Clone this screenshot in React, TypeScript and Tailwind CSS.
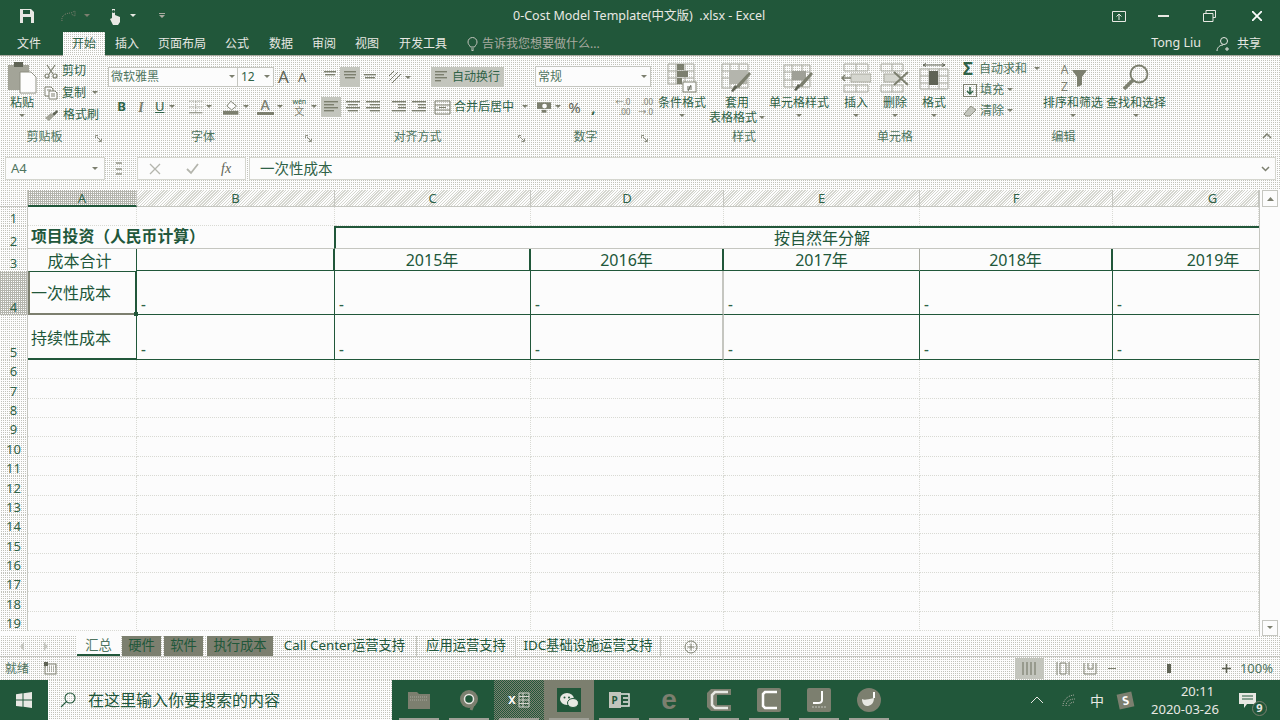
import type { ReactNode } from "react";

const DITHER = "bg-[repeating-conic-gradient(#c2c3bb_0_25%,#fdfdfd_0_100%)] bg-[length:2px_2px]";
const HATCH = "bg-[repeating-linear-gradient(135deg,#fdfdfd_0_1px,#d5d6cf_1px_2px)]";
const DARK = "bg-[repeating-conic-gradient(#fdfdfd_0_25%,#b4b5ad_0_100%)] bg-[length:2px_2px]";
const HOVER = "bg-[repeating-conic-gradient(#7c7f6f_0_25%,#21573a_0_50%,#7c7f6f_0_75%,#21573a_0_100%)] bg-[length:2px_2px]";

function Caret({ className = "" }: { className?: string }) {
  return (
    <svg width="6" height="4" viewBox="0 0 6 4" className={`shrink-0 text-[#7c7f6f] ${className}`}>
      <path d="M0 0h6L3 3z" fill="currentColor" />
    </svg>
  );
}

function Launcher() {
  return (
    <svg width="7" height="7" viewBox="0 0 7 7" className="shrink-0 text-[#8d8f82]">
      <path d="M0.5 3V0.5H3M2 2l4 4M6.5 3.5v3h-3" fill="none" stroke="currentColor" />
    </svg>
  );
}

function Group({ className, label, labelPad = "", launcher, children }: { className: string; label: string; labelPad?: string; launcher?: boolean; children: ReactNode }) {
  return (
    <div className={`flex flex-col shrink-0 ${className}`}>
      <div className="h-[73px]">{children}</div>
      <div className={`relative flex h-[16px] items-center justify-center text-[12px] text-[#4f7560] ${labelPad}`}>
        {label}
        {launcher && (
          <span className="absolute right-[5px] top-[6px]">
            <Launcher />
          </span>
        )}
      </div>
    </div>
  );
}

function BigBtn({ className, icon, lines, caret = true }: { className: string; icon: ReactNode; lines: ReactNode[]; caret?: boolean }) {
  return (
    <div className={`flex flex-col items-center pt-[6px] shrink-0 ${className}`}>
      <div className="flex h-[31px] items-center justify-center">{icon}</div>
      <div className="mt-[2px] text-center text-[12px] leading-[15px] text-[#2f6247] whitespace-nowrap">
        {lines.map((l, i) => (
          <div key={i} className="flex items-center justify-center gap-[2px]">
            {l}
          </div>
        ))}
      </div>
      {caret && <Caret className="mt-[4px]" />}
    </div>
  );
}

function Lines({ rows }: { rows: [number, number][] }) {
  return (
    <svg width="16" height="14" viewBox="0 0 16 14" className="text-[#7c7f6f]">
      {rows.map(([x, w], i) => (
        <rect key={i} x={x} y={1 + i * 3} width={w} height="1.4" fill="currentColor" />
      ))}
    </svg>
  );
}

const PasteIcon = (
  <svg width="30" height="34" viewBox="0 0 30 34">
    <rect x="1" y="4" width="21" height="25" fill="#a3a498" />
    <rect x="7" y="1" width="9" height="5" fill="#5f6355" />
    <path d="M13 11h11l5 5v16H13z" fill="#fdfdfd" stroke="#8d8f82" />
  </svg>
);

const CutIcon = (
  <svg width="14" height="15" viewBox="0 0 14 15" fill="none" stroke="#7c7f6f" strokeWidth="1.2">
    <path d="M3 1l6 9M11 1L5 10" />
    <circle cx="3" cy="12" r="2" />
    <circle cx="11" cy="12" r="2" />
  </svg>
);

const CopyIcon = (
  <svg width="14" height="14" viewBox="0 0 14 14" fill="#fdfdfd" stroke="#7c7f6f">
    <path d="M1 1h6l2 2v7H1z" />
    <path d="M5 5h6l2 2v6H5z" />
    <path d="M3 4h4M7 8h4M7 10h4" />
  </svg>
);

const BrushIcon = (
  <svg width="15" height="13" viewBox="0 0 15 13">
    <path d="M8 5l5-4 1 2-4 4z" fill="#5f6355" />
    <path d="M1 9l6-5 3 3-5 5z" fill="#a3a498" />
  </svg>
);

const CondIcon = (
  <svg width="30" height="30" viewBox="0 0 30 30" fill="none" stroke="#a9aaa0">
    <path d="M1 1h26v20H1zM1 8h26M1 15h26M9 1v20M18 1v20" />
    <rect x="10" y="1" width="7" height="6" fill="#7c7f6f" stroke="none" />
    <rect x="10" y="8" width="11" height="6" fill="#7c7f6f" stroke="none" />
    <rect x="10" y="15" width="5" height="6" fill="#7c7f6f" stroke="none" />
    <rect x="16" y="19" width="13" height="10" fill="#fdfdfd" stroke="#7c7f6f" />
    <path d="M20 24h5M20 26h5M24 22l-3 6" stroke="#5f6355" />
  </svg>
);

const TableIcon = (
  <svg width="32" height="32" viewBox="0 0 32 32" fill="none" stroke="#a9aaa0">
    <path d="M1 2h26v24H1zM1 9h26M1 16h26M9 2v24M18 2v24" />
    <rect x="8" y="8" width="18" height="14" fill="#b4b5ad" stroke="none" />
    <path d="M30 12L18 26l-3-2 13-14z" fill="#7c7f6f" stroke="none" />
    <path d="M17 25l-5 5-2-1 4-6z" fill="#5f6355" stroke="none" />
  </svg>
);

const CellStyleIcon = (
  <svg width="32" height="30" viewBox="0 0 32 30" fill="none" stroke="#a9aaa0">
    <path d="M1 2h26v22H1zM1 9h26M9 2v22M19 2v22M1 17h26" />
    <rect x="9" y="8" width="14" height="9" fill="#9fa097" stroke="none" />
    <path d="M30 11L19 24l-3-2 12-13z" fill="#7c7f6f" stroke="none" />
    <path d="M18 23l-5 5-2-1 4-6z" fill="#5f6355" stroke="none" />
  </svg>
);

const InsertIcon = (
  <svg width="30" height="30" viewBox="0 0 30 30" fill="none" stroke="#a9aaa0">
    <path d="M3 1h24v7H3zM3 22h24v7H3zM15 1v7M15 22v7" />
    <rect x="10" y="11" width="20" height="8" fill="#d5d6cf" stroke="#a9aaa0" />
    <path d="M1 15h9M4 12l-3 3 3 3" stroke="#7c7f6f" strokeWidth="1.5" />
  </svg>
);

const DeleteIcon = (
  <svg width="30" height="30" viewBox="0 0 30 30" fill="none" stroke="#a9aaa0">
    <path d="M1 1h22v7H1zM1 22h22v7H1zM12 1v7M12 22v7" />
    <rect x="4" y="11" width="16" height="8" fill="#d5d6cf" />
    <path d="M14 9l14 13M28 9L14 22" stroke="#7c7f6f" strokeWidth="2" />
  </svg>
);

const FormatIcon = (
  <svg width="30" height="30" viewBox="0 0 30 30" fill="none" stroke="#a9aaa0">
    <path d="M1 6h28v20H1zM1 13h28M1 20h28M10 6v20M20 6v20" />
    <rect x="10" y="8" width="9" height="14" fill="#5f6355" stroke="none" />
    <path d="M4 2h22M4 2l3-1.500M4 2l3 1.500M26 2l-3-1.500M26 2l-3 1.500" stroke="#5f6355" />
  </svg>
);

const SortIcon = (
  <div className="flex items-center">
    <div className="flex w-[13px] flex-col items-center text-[12px] leading-[17px] text-[#7c7f6f]">
      <span>A</span>
      <span>Z</span>
    </div>
    <svg width="17" height="18" viewBox="0 0 17 18">
      <path d="M1 1h15l-5 7v8l-5 2V8z" fill="#7c7f6f" />
    </svg>
  </div>
);

const FindIcon = (
  <svg width="28" height="28" viewBox="0 0 28 28" fill="none" stroke="#7c7f6f">
    <circle cx="17" cy="10" r="8.500" strokeWidth="1.800" />
    <path d="M11 16L2 25" strokeWidth="3.500" />
  </svg>
);

function Ribbon() {
  return (
    <div className={`flex h-[94px] ${DITHER}`}>
      <Group className="w-[107px]" label="剪贴板" labelPad="pr-[18px]" launcher>
        <div className="flex">
          <BigBtn className="w-[44px]" icon={PasteIcon} lines={["粘贴"]} />
          <div className="flex flex-col gap-[6px] pt-[7px] text-[12px] leading-[16px] text-[#2f6247]">
            <div className="flex items-center gap-[4px]">{CutIcon}<span>剪切</span></div>
            <div className="flex items-center gap-[4px]">{CopyIcon}<span>复制</span><Caret className="ml-[2px]" /></div>
            <div className="flex items-center gap-[4px]">{BrushIcon}<span>格式刷</span></div>
          </div>
        </div>
      </Group>

      <Group className="w-[210px]" label="字体" labelPad="pr-[18px]" launcher>
        <div className="flex h-[31px] items-end pl-[1px]">
          <div className="flex h-[20px] w-[130px] items-center justify-between border border-[#c5c6c0] bg-[#fcfcfc] px-[2px] text-[12px] text-[#4f7560]">
            微软雅黑<Caret />
          </div>
          <div className="flex h-[20px] w-[36px] items-center justify-between border border-l-0 border-[#c5c6c0] bg-[#fcfcfc] px-[3px] text-[12px] text-[#2f6247]">
            12<Caret />
          </div>
          <span className="ml-[4px] w-[20px] text-[17px] leading-[20px] text-[#5f6355]">A</span>
          <span className="w-[16px] text-[13px] leading-[20px] text-[#5f6355]">A</span>
        </div>
        <div className="mt-[10px] flex h-[20px] items-center text-[#2f6247]">
          <span className="ml-[5px] w-[20px] text-center text-[13px] font-bold">B</span>
          <span className="w-[20px] text-center font-['Liberation_Serif'] text-[14px] font-bold italic text-[#7c7f6f]">I</span>
          <span className="w-[19px] text-center text-[13px] underline">U</span>
          <Caret />
          <svg width="16" height="14" viewBox="0 0 16 14" fill="none" stroke="#a9aaa0" strokeDasharray="2 1" className="ml-[13px]">
            <path d="M1 1h14M1 7h14M8 1v12" />
            <path d="M1 13h14" stroke="#7c7f6f" strokeDasharray="none" />
          </svg>
          <Caret className="ml-[3px]" />
          <svg width="17" height="15" viewBox="0 0 17 15" className="ml-[11px]">
            <path d="M8 1l6 5-5 4-5-4z" fill="#fdfdfd" stroke="#7c7f6f" />
            <rect x="0" y="11" width="16" height="4" fill="#7c7f6f" />
          </svg>
          <Caret className="ml-[3px]" />
          <div className="ml-[8px] flex w-[17px] flex-col items-center">
            <span className="text-[14px] font-medium leading-[12px] text-[#7c7f6f]">A</span>
            <span className="mt-[1px] h-[3px] w-[17px] bg-[#7c7f6f]" />
          </div>
          <Caret className="ml-[3px]" />
          <div className="ml-[9px] flex w-[16px] flex-col items-center text-[#7c7f6f]">
            <span className="text-[7px] leading-[9px] text-[#2f6247]">wén</span>
            <span className="text-[10px] leading-[11px]">文</span>
          </div>
          <Caret className="ml-[4px]" />
        </div>
      </Group>

      <Group className="w-[213px]" label="对齐方式" labelPad="pr-[12px]" launcher>
        <div className="flex h-[31px] items-end">
          <div className="ml-[3px] flex h-[20px] w-[20px] items-center justify-center"><Lines rows={[[2, 12], [3, 10]]} /></div>
          <div className="flex h-[20px] w-[20px] items-center justify-center bg-[#c3c5bd]"><Lines rows={[[2, 12], [2, 12], [3, 10]]} /></div>
          <div className="flex h-[20px] w-[20px] items-center justify-center pt-[6px]"><Lines rows={[[2, 12], [3, 10]]} /></div>
          <svg width="16" height="14" viewBox="0 0 16 14" fill="none" stroke="#7c7f6f" className="ml-[7px] mb-[3px]">
            <path d="M2 11l9-9M5 13l9-9M2 6l5-5" />
          </svg>
          <Caret className="mb-[7px] ml-[2px]" />
          <div className="ml-[20px] flex h-[20px] w-[73px] items-center gap-[3px] bg-[#c3c5bd] pl-[3px] text-[12px] text-[#2f6247]">
            <Lines rows={[[1, 12], [1, 9], [1, 12], [1, 6]]} />
            <span className="-ml-[1px]">自动换行</span>
          </div>
        </div>
        <div className="mt-[10px] flex h-[20px] items-center">
          <div className="ml-[4px] flex h-[20px] w-[20px] items-center justify-center bg-[#c3c5bd]"><Lines rows={[[1, 14], [1, 10], [1, 14], [1, 10]]} /></div>
          <div className="ml-[2px] flex w-[20px] justify-center"><Lines rows={[[1, 14], [3, 10], [1, 14], [3, 10]]} /></div>
          <div className="flex w-[20px] justify-center"><Lines rows={[[1, 14], [5, 10], [1, 14], [5, 10]]} /></div>
          <div className="ml-[6px] flex w-[20px] justify-center"><Lines rows={[[1, 14], [7, 8], [7, 8], [1, 14]]} /></div>
          <div className="flex w-[20px] justify-center"><Lines rows={[[1, 14], [7, 8], [7, 8], [1, 14]]} /></div>
          <svg width="17" height="15" viewBox="0 0 17 15" fill="none" stroke="#7c7f6f" className="ml-[5px]">
            <path d="M1 1h15v13H1zM1 5h15M1 10h15M5 7.500h7" />
          </svg>
          <span className="ml-[3px] text-[12px] text-[#2f6247]">合并后居中</span>
          <Caret className="ml-[8px]" />
        </div>
      </Group>

      <Group className="w-[123px]" label="数字" labelPad="pr-[12px]" launcher>
        <div className="flex h-[31px] items-end pl-[5px]">
          <div className="flex h-[21px] w-[116px] items-center justify-between border border-[#c5c6c0] bg-[#fcfcfc] pl-[2px] pr-[3px] text-[12px] text-[#4f7560]">
            常规<Caret />
          </div>
        </div>
        <div className="mt-[10px] flex h-[20px] items-center text-[#7c7f6f]">
          <svg width="15" height="13" viewBox="0 0 15 13" className="ml-[7px]">
            <rect x="0" y="1" width="15" height="7" fill="#7c7f6f" />
            <circle cx="8" cy="5" r="2.500" fill="#fdfdfd" />
            <rect x="5" y="9" width="5" height="3" fill="#7c7f6f" />
          </svg>
          <Caret className="ml-[4px]" />
          <span className="ml-[7px] w-[16px] text-[15px] leading-[18px] text-[#5f6355]">%</span>
          <span className="ml-[8px] w-[10px] text-[15px] font-bold leading-[12px] text-[#2f6247]">,</span>
          <div className="ml-[7px] flex w-[24px] flex-col items-end text-[8px] leading-[10px] text-[#7c7f6f]"><span>←.0</span><span>.00</span></div>
          <div className="flex w-[24px] flex-col items-end text-[8px] leading-[10px] text-[#7c7f6f]"><span>.00</span><span>→.0</span></div>
        </div>
      </Group>

      <Group className="w-[182px]" label="样式">
        <div className="flex pl-[4px]">
          <BigBtn className="w-[50px]" icon={CondIcon} lines={["条件格式"]} />
          <BigBtn className="w-[60px]" icon={TableIcon} lines={["套用", <>表格格式<Caret /></>]} caret={false} />
          <BigBtn className="w-[64px]" icon={CellStyleIcon} lines={["单元格样式"]} />
        </div>
      </Group>

      <Group className="w-[120px]" label="单元格">
        <div className="flex pl-[2px]">
          <BigBtn className="w-[38px]" icon={InsertIcon} lines={["插入"]} />
          <BigBtn className="w-[40px]" icon={DeleteIcon} lines={["删除"]} />
          <BigBtn className="w-[38px]" icon={FormatIcon} lines={["格式"]} />
        </div>
      </Group>

      <Group className="relative flex-1" label="编辑" labelPad="pr-[108px]">
        <div className="flex">
          <div className="flex w-[86px] flex-col gap-[5px] pl-[8px] pt-[5px] text-[12px] leading-[16px] text-[#4f7560]">
            <div className="flex items-center gap-[3px]">
              <span className="w-[13px] text-[17px] font-bold leading-[16px] text-[#2f6247]">Σ</span>
              <span className="whitespace-nowrap">自动求和</span><Caret className="ml-[4px]" />
            </div>
            <div className="flex items-center gap-[3px]">
              <svg width="14" height="14" viewBox="0 0 14 14" fill="none" stroke="#7c7f6f">
                <rect x="0.500" y="1.500" width="13" height="12" />
                <path d="M7 4v7M4 8l3 3 3-3" stroke="#2f6247" strokeWidth="1.500" />
              </svg>
              <span>填充</span><Caret />
            </div>
            <div className="flex items-center gap-[3px]">
              <svg width="14" height="13" viewBox="0 0 14 13" fill="#c3c5bd" stroke="#8d8f82">
                <path d="M1 9l7-8 5 4-6 6H3z" />
              </svg>
              <span>清除</span><Caret />
            </div>
          </div>
          <BigBtn className="ml-[2px] w-[60px]" icon={SortIcon} lines={["排序和筛选"]} />
          <BigBtn className="ml-[3px] w-[60px]" icon={FindIcon} lines={["查找和选择"]} />
        </div>
        <svg width="10" height="6" viewBox="0 0 10 6" fill="none" stroke="#7c7f6f" strokeWidth="1.500" className="absolute right-[8px] bottom-[11px]">
          <path d="M1 5l4-4 4 4" />
        </svg>
      </Group>
    </div>
  );
}

function FormulaBar() {
  return (
    <div className={`flex h-[40px] items-start pt-[7px] ${DITHER}`}>
      <div className="ml-[5px] flex h-[23px] w-[100px] items-center justify-between border border-[#d5d6cf] bg-[#fcfcfc] pl-[5px] pr-[6px] text-[13px] text-[#4f7560]">
        A4<Caret />
      </div>
      <div className="ml-[11px] mt-[5px] flex h-[13px] w-[6px] flex-col justify-between">
        <span className="h-[2px] w-[6px] bg-[#a9aaa0]" />
        <span className="h-[2px] w-[6px] bg-[#a9aaa0]" />
        <span className="h-[2px] w-[6px] bg-[#a9aaa0]" />
      </div>
      <div className="ml-[15px] flex h-[23px] w-[109px] items-center border border-[#d5d6cf] bg-[#fcfcfc] text-[#b4b5ad]">
        <svg width="12" height="12" viewBox="0 0 12 12" stroke="currentColor" strokeWidth="1.300" className="ml-[11px]"><path d="M1 1l10 10M11 1L1 11" /></svg>
        <svg width="13" height="12" viewBox="0 0 13 12" fill="none" stroke="currentColor" strokeWidth="1.800" className="ml-[25px]"><path d="M1 6l4 4 7-9" /></svg>
        <span className="ml-[22px] font-['Liberation_Serif'] text-[14px] italic text-[#5f6355]">fx</span>
      </div>
      <div className="ml-[3px] mr-[4px] flex h-[23px] flex-1 items-center justify-between border border-[#d5d6cf] bg-[#fcfcfc] pl-[10px] pr-[5px] text-[14.500px] text-[#2f6247]">
        一次性成本
        <svg width="9" height="6" viewBox="0 0 9 6" fill="none" stroke="#7c7f6f" strokeWidth="1.500"><path d="M1 1l3.500 3.500L8 1" /></svg>
      </div>
    </div>
  );
}

const gridLine = "border-r border-b border-dotted border-[#d9dad4]";
const columns = ["A", "B", "C", "D", "E", "F", "G"];
const rowLabel = "flex items-end justify-center overflow-hidden text-[13px] leading-[15px] text-[#2f6247] border-r border-[#c5c6c0]";

function RowHead({ n, on }: { n: number; on?: boolean }) {
  return <div className={`${rowLabel} ${on ? DARK : DITHER}`}>{n}</div>;
}

function Dash({ className }: { className: string }) {
  return <div className={`flex items-end pl-[4px] text-[15px] font-medium leading-[19px] text-[#2f6247] ${className}`}>-</div>;
}

function Sheet() {
  return (
    <div className="flex h-[446px]">
      <div className="grid flex-1 grid-cols-[28px_109px_198px_196px_193px_196px_193px_146px] grid-rows-[17px_19px_23px_22px_44px_45px_repeat(14,19.360px)] overflow-hidden bg-[#fcfcfc]">
        <div className={`border-b border-r border-[#c5c6c0] ${DITHER}`} />
        {columns.map((c) => (
          <div
            key={c}
            className={`flex items-center justify-center border-r border-[#c5c6c0] text-[13px] leading-[14px] text-[#2f6247] ${
              c === "A" ? `border-b-2 border-b-[#21573a] ${DARK}` : `border-b ${HATCH} ${c === "G" ? "pl-[54px]" : ""}`
            }`}
          >
            {c}
          </div>
        ))}

        {/* row 1 */}
        <RowHead n={1} />
        {columns.map((c) => <div key={c} className={gridLine} />)}

        {/* row 2 */}
        <RowHead n={2} />
        <div className="col-span-2 flex items-center whitespace-nowrap border-b border-[#c5c6c0] pl-[3px] text-[15.800px] font-bold text-[#21573a]">
          项目投资（人民币计算）
        </div>
        <div className="col-span-5 -ml-[1px] flex items-center border-t-2 border-l-2 border-b border-t-[#21573a] border-l-[#21573a] border-b-[#c5c6c0] pl-[438px] text-[16px] text-[#21573a]">
          按自然年分解
        </div>

        {/* row 3 */}
        <RowHead n={3} />
        <div className="flex items-center justify-center border-r border-[#21573a] pr-[5px] pt-[2px] text-[16px] text-[#21573a]">成本合计</div>
        <div className="border-r-2 border-b border-[#21573a]" />
        {["2015年", "2016年", "2017年"].map((y, i) => (
          <div key={y} className={`flex items-center justify-center border-b border-b-[#21573a] text-[16px] text-[#21573a] ${i < 2 ? "border-r-2 border-r-[#21573a]" : "border-r border-r-[#a9aaa0]"}`}>{y}</div>
        ))}
        <div className="flex items-center justify-center border-b border-r-2 border-[#21573a] text-[16px] text-[#21573a]">2018年</div>
        <div className="flex items-center justify-center border-b border-[#21573a] pl-[54px] text-[16px] text-[#21573a]">2019年</div>

        {/* row 4 */}
        <RowHead n={4} on />
        <div className="relative flex items-center whitespace-nowrap border-2 border-t border-t-[#21573a] border-r-[#21573a] border-[#7c7f6f] pl-[1px] pt-[1px] text-[16px] text-[#21573a]">
          一次性成本
          <span className="absolute -bottom-[3px] -right-[3px] h-[4px] w-[4px] bg-[#21573a]" />
        </div>
        <Dash className="border-r border-b border-[#21573a]" />
        <Dash className="border-r border-b border-[#21573a]" />
        <Dash className="border-r-2 border-b border-r-[#c5c6c0] border-b-[#21573a]" />
        <Dash className="border-r border-b border-[#21573a]" />
        <Dash className="border-r border-b border-[#21573a]" />
        <Dash className="border-b border-[#21573a]" />

        {/* row 5 */}
        <RowHead n={5} />
        <div className="flex items-center whitespace-nowrap border-r border-b-2 border-[#21573a] pl-[3px] pt-[2px] text-[16px] text-[#21573a]">持续性成本</div>
        <Dash className="border-r border-b border-[#21573a]" />
        <Dash className="border-r border-b border-[#21573a]" />
        <Dash className="border-r-2 border-b border-r-[#c5c6c0] border-b-[#21573a]" />
        <Dash className="border-r border-b border-[#21573a]" />
        <Dash className="border-r border-b border-[#21573a]" />
        <Dash className="border-b border-[#21573a]" />

        {Array.from({ length: 14 }, (_, i) => i + 6).map((n) => (
          <div key={n} className="contents">
            <RowHead n={n} />
            {columns.map((c) => <div key={c} className={gridLine} />)}
          </div>
        ))}
      </div>

      <div className="flex w-[21px] flex-col border-l border-[#c5c6c0] bg-[#fcfcfc] px-[2px]">
        <div className="flex h-[17px] items-center justify-center border border-[#c5c6c0]"><svg width="7" height="4" viewBox="0 0 7 4"><path d="M0 4h7L3.500 0z" fill="#7c7f6f" /></svg></div>
        <div className="flex-1" />
        <div className="flex h-[16px] items-center justify-center border border-[#c5c6c0]"><Caret /></div>
      </div>
    </div>
  );
}

function SheetTabs() {
  return (
    <div className={`flex h-[21px] items-stretch border-b border-[#c5c6c0] text-[13.300px] leading-[18px] ${DITHER}`}>
      <div className="flex w-[77px] items-center pl-[20px] text-[#c5c6c0]">
        <svg width="30" height="9" viewBox="0 0 30 9" fill="currentColor"><path d="M4 0v9L0 4.500zM24 0v9l4-4.500z" /></svg>
      </div>
      <div className="flex w-[43px] justify-center border-b-2 border-[#21573a] bg-[#fcfcfc] text-[#4f7560]">汇总</div>
      <div className="ml-[2px] flex w-[39px] justify-center bg-[#7c7f6f] text-[#21573a]">硬件</div>
      <div className="ml-[3px] flex w-[39px] justify-center bg-[#7c7f6f] text-[#21573a]">软件</div>
      <div className="ml-[4px] flex w-[66px] justify-center bg-[#7c7f6f] text-[#21573a]">执行成本</div>
      <div className="flex w-[144px] justify-center border-r border-[#c5c6c0] text-[#21573a]">Call Center运营支持</div>
      <div className="flex w-[99px] justify-center border-r border-[#c5c6c0] text-[#21573a]">应用运营支持</div>
      <div className="flex w-[145px] justify-center border-r border-[#c5c6c0] text-[#21573a]">IDC基础设施运营支持</div>
      <svg width="14" height="14" viewBox="0 0 14 14" fill="none" stroke="#7c7f6f" className="ml-[23px] mt-[4px]">
        <circle cx="7" cy="7" r="6" /><path d="M7 3.500v7M3.500 7h7" />
      </svg>
    </div>
  );
}

function StatusBar() {
  return (
    <div className={`flex h-[23px] items-center text-[12px] text-[#4f7560] ${DITHER}`}>
      <span className="ml-[5px]">就绪</span>
      <svg width="13" height="13" viewBox="0 0 13 13" fill="none" stroke="#7c7f6f" className="ml-[15px]">
        <rect x="1" y="2" width="11" height="10" /><path d="M1 5h11M3 7h7M3 9h7" strokeDasharray="1 1" /><rect x="0" y="0" width="4" height="4" fill="#5f6355" stroke="none" />
      </svg>
      <div className="flex-1" />
      <div className="flex h-[21px] w-[29px] items-center justify-center bg-[#c3c5bd]">
        <svg width="16" height="13" viewBox="0 0 16 13" stroke="#7c7f6f" strokeWidth="1.200"><path d="M2 0v13M6 0v13M10 0v13M14 0v13" /></svg>
      </div>
      <svg width="14" height="13" viewBox="0 0 14 13" fill="none" stroke="#7c7f6f" className="ml-[12px]"><path d="M1 0v13M13 0v13M4 1h6v11H4z" /></svg>
      <svg width="14" height="13" viewBox="0 0 14 13" fill="none" stroke="#7c7f6f" className="ml-[13px]"><path d="M1 1v11h12V1M5 1v6h5V1" /></svg>
      <span className="ml-[11px] h-[1.500px] w-[8px] bg-[#7c7f6f]" />
      <span className="ml-[51px] h-[9px] w-[4px] bg-[#5f6355]" />
      <svg width="9" height="9" viewBox="0 0 9 9" stroke="#5f6355" strokeWidth="1.500" className="ml-[51px]"><path d="M4.500 0v9M0 4.500h9" /></svg>
      <span className="ml-[9px] mr-[7px] text-[13px]">100%</span>
    </div>
  );
}

const taskIcons: { key: string; wrap?: string; icon: ReactNode }[] = [
  {
    key: "folder",
    icon: (
      <svg width="22" height="18" viewBox="0 0 22 18">
        <path d="M0 1h9l2 2h11v15H0z" fill="#7c7f6f" />
        <path d="M2 6h18M2 9h18" stroke="#a9aaa0" strokeDasharray="1 1" />
      </svg>
    ),
  },
  {
    key: "chrome",
    icon: (
      <svg width="22" height="22" viewBox="0 0 22 22" fill="none">
        <circle cx="11" cy="10" r="9" fill="#7c7f6f" />
        <circle cx="11" cy="10" r="4.500" fill="#21573a" stroke="#e8e8e3" strokeWidth="1.500" />
        <path d="M16 14l-3 7" stroke="#7c7f6f" strokeWidth="3" />
      </svg>
    ),
  },
  {
    key: "excel",
    wrap: HOVER,
    icon: (
      <div className="flex items-center">
        <span className="text-[11px] font-bold text-[#fdfdfd]">X</span>
        <svg width="12" height="16" viewBox="0 0 12 16" fill="none" stroke="#d5d6cf" className="ml-[2px]">
          <path d="M1 1h10v14H1zM1 4.500h10M1 8h10M1 11.500h10M5 1v14" />
        </svg>
      </div>
    ),
  },
  {
    key: "wechat",
    wrap: "bg-[#7c7f6f]",
    icon: (
      <div className="flex h-[24px] w-[24px] items-center justify-center bg-[#21573a]">
        <svg width="20" height="17" viewBox="0 0 20 17">
          <ellipse cx="8" cy="7" rx="7" ry="6" fill="#e8e8e3" />
          <ellipse cx="14" cy="11" rx="5.500" ry="4.500" fill="#e8e8e3" stroke="#21573a" />
          <circle cx="5.500" cy="5.500" r="1" fill="#21573a" />
          <circle cx="10" cy="5.500" r="1" fill="#21573a" />
        </svg>
      </div>
    ),
  },
  {
    key: "ppt",
    icon: (
      <div className="flex items-center">
        <span className="flex h-[16px] w-[12px] items-center justify-center bg-[#c3c5bd] text-[10px] font-bold text-[#21573a]">P</span>
        <svg width="9" height="14" viewBox="0 0 9 14" fill="none" stroke="#e8e8e3" strokeWidth="1.500"><path d="M0 1h8v12H0M2 5h5M2 9h5" /></svg>
      </div>
    ),
  },
  {
    key: "edge",
    icon: <span className="font-['Liberation_Sans'] text-[28px] font-bold leading-[24px] text-[#7c7f6f]">e</span>,
  },
  {
    key: "cam1",
    icon: (
      <svg width="24" height="22" viewBox="0 0 24 22">
        <path d="M4 0h20v6H10v10h14v6H4l-4-4V4z" fill="#7c7f6f" />
        <path d="M21 3H8L5 6v10l3 3h13" fill="none" stroke="#e8e8e3" strokeWidth="2.500" />
      </svg>
    ),
  },
  {
    key: "cam2",
    icon: (
      <svg width="24" height="24" viewBox="0 0 24 24">
        <rect x="0" y="0" width="24" height="24" rx="2" fill="#7c7f6f" />
        <path d="M20 4H8L6 6v12l2 2h12" fill="none" stroke="#fdfdfd" strokeWidth="2.500" />
      </svg>
    ),
  },
  {
    key: "note",
    icon: (
      <svg width="24" height="24" viewBox="0 0 24 24">
        <rect x="0" y="0" width="24" height="24" rx="2" fill="#7c7f6f" />
        <path d="M15 3v9c0 2-2 3-4 3H6" fill="none" stroke="#fdfdfd" strokeWidth="2" />
        <path d="M5 19h14" stroke="#c3c5bd" strokeDasharray="2 1" />
      </svg>
    ),
  },
  {
    key: "music",
    icon: (
      <svg width="24" height="24" viewBox="0 0 24 24">
        <circle cx="12" cy="12" r="12" fill="#7c7f6f" />
        <path d="M17 4v6" stroke="#fdfdfd" strokeWidth="2" />
        <path d="M5 11c2 1 4 1 12-1 0 6-4 8-7 8-3 0-5-3-5-7z" fill="#e8e8e3" />
      </svg>
    ),
  },
];

function Taskbar() {
  return (
    <div className="flex h-[40px] bg-[#21573a]">
      <div className="flex w-[48px] items-center justify-center">
        <svg width="16" height="16" viewBox="0 0 16 16" fill="#e8e8e3">
          <path d="M0 2.200l6.500-.9v6.300H0zM7.500 1.200L16 0v7.600H7.500zM0 8.600h6.500v6.200L0 13.900zM7.500 8.600H16V16l-8.500-1.200z" />
        </svg>
      </div>
      <div className={`flex w-[344px] items-center ${DITHER}`}>
        <svg width="16" height="16" viewBox="0 0 16 16" fill="none" stroke="#21573a" strokeWidth="1.100" className="ml-[12px]">
          <circle cx="10" cy="6" r="5" /><path d="M6.500 9.500L1 15" />
        </svg>
        <span className="ml-[12px] text-[16px] text-[#21573a]">在这里输入你要搜索的内容</span>
      </div>
      <div className="ml-[2px] flex">
        {taskIcons.map((t) => (
          <div key={t.key} className={`relative flex w-[50px] items-center justify-center ${t.wrap ?? ""}`}>
            {t.icon}
            <span className="absolute bottom-0 left-[5px] right-[5px] h-[2px] bg-[#9fa097]" />
          </div>
        ))}
      </div>
      <div className="flex-1" />
      <div className="flex items-center text-[#e8e8e3]">
        <div className="flex w-[34px] justify-center">
          <svg width="14" height="8" viewBox="0 0 14 8" fill="none" stroke="currentColor"><path d="M1 7l6-6 6 6" /></svg>
        </div>
        <div className="flex w-[30px] justify-center">
          <svg width="14" height="13" viewBox="0 0 14 13" fill="none" stroke="#a9aaa0"><path d="M1 12C1 6 6 1 13 1M4 12c0-4 3-7 9-7M7 12c0-2 2-4 6-4" strokeDasharray="1 1" /></svg>
        </div>
        <div className="flex w-[26px] justify-center text-[14px]">中</div>
        <div className="flex w-[30px] justify-center">
          <span className="flex h-[15px] w-[15px] -rotate-12 items-center justify-center bg-[#7c7f6f] text-[12px] font-bold text-[#fdfdfd]">S</span>
        </div>
        <div className="flex w-[90px] flex-col items-center text-[13px] leading-[18px]">
          <span className="pl-[25px]">20:11</span>
          <span>2020-03-26</span>
        </div>
        <div className="relative flex w-[40px] justify-center pr-[6px]">
          <svg width="17" height="15" viewBox="0 0 17 15" fill="#e8e8e3">
            <path d="M0 0h17v11H8l-3 4v-4H0z" />
            <path d="M3 3h11M3 6h11" stroke="#21573a" />
          </svg>
          <span className="absolute bottom-[-8px] right-[3px] flex h-[15px] w-[15px] items-center justify-center rounded-full border border-[#7c7f6f] bg-[#21573a] text-[11px] font-bold">9</span>
        </div>
        <div className="w-[10px]" />
      </div>
    </div>
  );
}

function TitleBar() {
  return (
    <div className="flex h-[32px] items-center text-[#e8e8e3]">
      <div className="flex w-[513px] items-center">
        <svg width="14" height="14" viewBox="0 0 14 14" className="ml-[20px]">
          <path d="M0 0h11l3 3v11H0z" fill="#e8e8e3" />
          <rect x="3" y="1" width="7" height="4" fill="#21573a" />
          <rect x="3" y="8" width="8" height="6" fill="#21573a" />
        </svg>
        <svg width="16" height="13" viewBox="0 0 16 13" fill="none" stroke="#7c7f6f" strokeDasharray="1 1" className="ml-[27px]">
          <path d="M1 11c-1-5 3-8 9-8l4-2v5l-4-2" />
        </svg>
        <Caret className="ml-[7px]" />
        <svg width="12" height="17" viewBox="0 0 12 17" className="ml-[19px]">
          <path d="M3 1h3v6l5 2v5l-2 3H4L1 11l2-1z" fill="#e8e8e3" />
          <circle cx="4.500" cy="3.500" r="1.500" fill="#21573a" />
        </svg>
        <svg width="6" height="4" viewBox="0 0 6 4" className="ml-[9px]"><path d="M0 0h6L3 3z" fill="#e8e8e3" /></svg>
        <svg width="6" height="6" viewBox="0 0 6 6" className="ml-[23px]"><path d="M0 0h6v1H0zM0 2h6L3 5z" fill="#a9aaa0" /></svg>
      </div>
      <div className="whitespace-pre text-[12.500px]">0-Cost Model Template(中文版)  .xlsx - Excel</div>
      <div className="flex-1" />
      <svg width="14" height="11" viewBox="0 0 14 11" fill="none" stroke="#e8e8e3">
        <path d="M0.500 0.500h13v10H0.500zM7 9V3M4.500 5.500L7 3l2.500 2.500" />
      </svg>
      <span className="ml-[32px] h-[2px] w-[11px] bg-[#e8e8e3]" />
      <svg width="13" height="12" viewBox="0 0 13 12" fill="none" stroke="#e8e8e3" className="ml-[34px]">
        <path d="M3 3V0.500h9.500v7H10M0.500 3.500h9.500v8H0.500z" />
      </svg>
      <svg width="10" height="10" viewBox="0 0 10 10" stroke="#fdfdfd" strokeWidth="1.800" className="ml-[36px] mr-[18px]">
        <path d="M0 0l10 10M10 0L0 10" />
      </svg>
    </div>
  );
}

function Tabs() {
  const items = [
    { t: "插入", c: "ml-[10px] w-[24px]" },
    { t: "页面布局", c: "ml-[19px] w-[48px]" },
    { t: "公式", c: "ml-[19px] w-[24px]" },
    { t: "数据", c: "ml-[20px] w-[24px]" },
    { t: "审阅", c: "ml-[19px] w-[24px]" },
    { t: "视图", c: "ml-[19px] w-[24px]" },
    { t: "开发工具", c: "ml-[20px] w-[48px]" },
  ];
  return (
    <div className="flex h-[24px] items-center border-b border-[#a9aaa0] text-[12px] text-[#e8e8e3]">
      <span className="ml-[17px] w-[25px]">文件</span>
      <div className={`ml-[21px] flex h-[24px] w-[42px] items-center justify-center text-[#2f6247] ${DITHER}`}>开始</div>
      {items.map((i) => (
        <span key={i.t} className={`whitespace-nowrap ${i.c}`}>{i.t}</span>
      ))}
      <svg width="11" height="14" viewBox="0 0 11 14" fill="none" stroke="#c3c5bd" className="ml-[20px]">
        <path d="M3.500 10C2.500 8 1 7.500 1 5a4.500 4.500 0 0 1 9 0c0 2.500-1.500 3-2.500 5zM4 12h3M4.500 13.500h2" />
      </svg>
      <span className="ml-[4px] text-[#a9aaa0]">告诉我您想要做什么...</span>
      <div className="flex-1" />
      <span className="text-[12.500px]">Tong Liu</span>
      <svg width="16" height="16" viewBox="0 0 16 16" fill="none" stroke="#e8e8e3" className="ml-[15px]">
        <circle cx="8" cy="5" r="3.500" /><path d="M1 15c0-3.500 3-6 6-6M11 11v4M9 13h4" />
      </svg>
      <span className="ml-[5px] mr-[19px]">共享</span>
    </div>
  );
}

export default function App() {
  return (
    <div className="h-[720px] w-[1280px] overflow-hidden bg-[#21573a] font-['Noto_Sans','Noto_Sans_CJK_SC',sans-serif]">
      <TitleBar />
      <Tabs />
      <Ribbon />
      <FormulaBar />
      <Sheet />
      <SheetTabs />
      <StatusBar />
      <Taskbar />
    </div>
  );
}
